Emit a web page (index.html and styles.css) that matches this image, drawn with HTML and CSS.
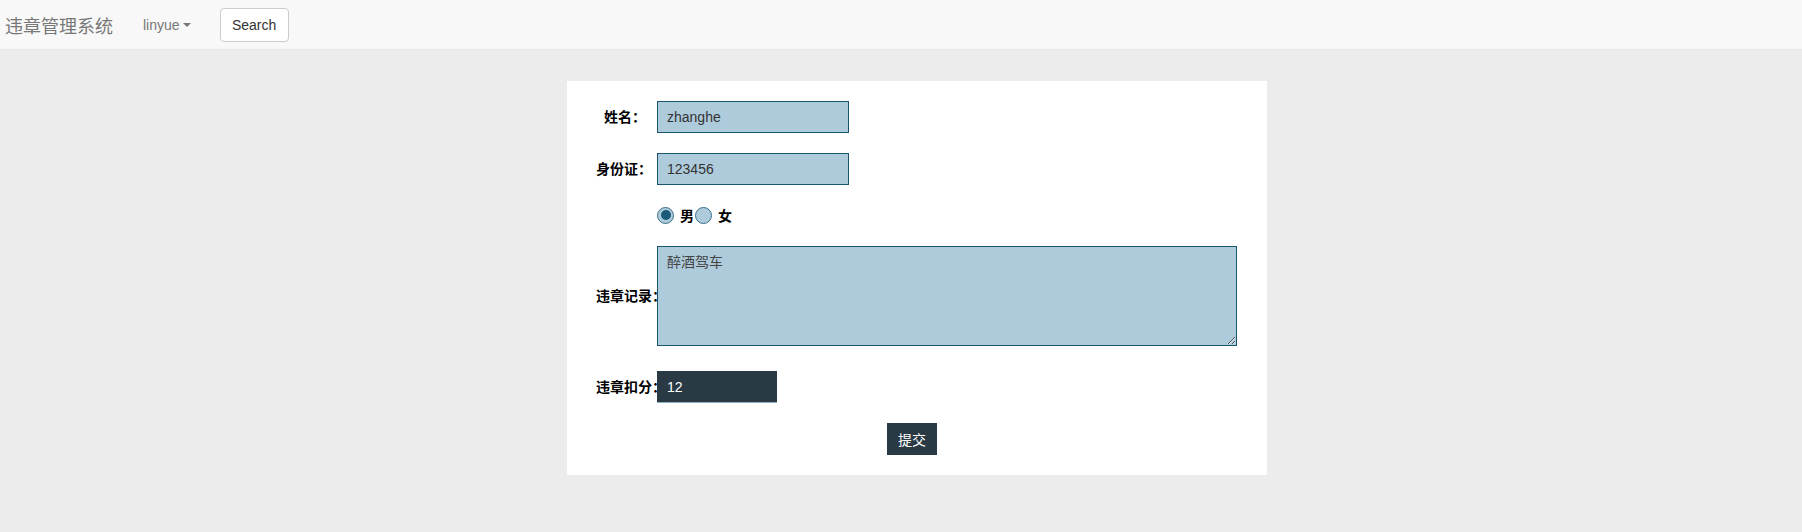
FILE: index.html
```html
<!DOCTYPE html>
<html lang="zh">
<head>
<meta charset="utf-8">
<title>违章管理系统</title>
<link rel="stylesheet" href="styles.css">
</head>
<body>
<nav class="navbar">
  <a class="brand" href="#">违章管理系统</a>
  <a class="user" href="#">linyue<span class="caret"></span></a>
  <button class="search-btn" type="button">Search</button>
</nav>
<main class="wrap">
  <form class="panel">
    <div class="row">
      <label class="lbl">姓名：</label>
      <input class="field" type="text" value="zhanghe">
    </div>
    <div class="row">
      <label class="lbl">身份证：</label>
      <input class="field" type="text" value="123456">
    </div>
    <div class="row radio-row">
      <span class="lbl"></span>
      <input class="radio" type="radio" name="sex" checked><span class="opt">男</span><input class="radio" type="radio" name="sex"><span class="opt">女</span>
    </div>
    <div class="row area-row">
      <label class="lbl">违章记录：</label>
      <textarea class="area">醉酒驾车</textarea>
    </div>
    <div class="row score-row">
      <label class="lbl">违章扣分：</label>
      <input class="score" type="text" value="12">
    </div>
    <div class="actions">
      <button class="submit" type="button">提交</button>
    </div>
  </form>
</main>
</body>
</html>
```
FILE: styles.css
```css
html, body {
  margin: 0;
  padding: 0;
}
body {
  background: #ececec;
  font-family: "Liberation Sans", "Noto Sans CJK SC", sans-serif;
  font-size: 14px;
  color: #333;
}
.navbar {
  height: 49px;
  background: #f8f8f8;
  border-bottom: 1px solid #e7e7e7;
  display: flex;
  align-items: center;
}
.brand {
  margin-left: 5px;
  font-size: 18px;
  color: #777;
  text-decoration: none;
  font-family: "Noto Sans CJK SC", sans-serif;
  line-height: 20px;
}
.user {
  margin-left: 30px;
  color: #777;
  text-decoration: none;
  display: flex;
  align-items: center;
}
.caret {
  display: inline-block;
  width: 0;
  height: 0;
  margin-left: 3px;
  border-top: 4px solid #777;
  border-left: 4px solid transparent;
  border-right: 4px solid transparent;
}
.search-btn {
  margin-left: 29px;
  height: 34px;
  width: 69px;
  background: #fff;
  border: 1px solid #ccc;
  border-radius: 4px;
  font-family: "Liberation Sans", sans-serif;
  font-size: 14px;
  color: #333;
  padding: 0;
}
.wrap {
  padding: 31px 0 0 32px;
}
.panel {
  width: 700px;
  margin: 0 auto;
  background: #fff;
  box-sizing: border-box;
  padding: 20px 30px 20px 20px;
}
.row {
  display: flex;
  align-items: center;
  margin-bottom: 20px;
}
.lbl {
  flex: 0 0 50px;
  width: 50px;
  margin-left: 9px;
  margin-right: 11px;
  text-align: right;
  white-space: nowrap;
  font-weight: bold;
  color: #000;
  font-family: "Noto Sans CJK SC", sans-serif;
  font-size: 14px;
  line-height: 18px;
  padding-bottom: 2px;
}
.field {
  width: 192px;
  height: 32px;
  box-sizing: border-box;
  margin: 0;
  padding: 0 9px;
  background: #aecbdc;
  border: 1px solid #1a5570;
  color: #333;
  font-family: "Liberation Sans", sans-serif;
  font-size: 14px;
  outline: none;
}
.radio-row {
  height: 20px;
  margin-bottom: 21px;
}
.radio {
  -webkit-appearance: none;
  appearance: none;
  width: 17px;
  height: 17px;
  margin: 0 6px 0 0;
  border-radius: 50%;
  background: #aecbdc;
  border: 1px solid #3d6f88;
  box-sizing: border-box;
  position: relative;
}
.radio:checked::after {
  content: "";
  position: absolute;
  left: 2.5px;
  top: 2.5px;
  width: 10px;
  height: 10px;
  border-radius: 50%;
  background: #1b5a78;
}
.opt {
  font-weight: bold;
  color: #000;
  font-family: "Noto Sans CJK SC", sans-serif;
}
.opt + .radio {
  margin-left: 1px;
}
.area-row {
  margin-bottom: 25px;
}
.area {
  width: 580px;
  height: 100px;
  box-sizing: border-box;
  margin: 0;
  padding: 4px 9px;
  background: #aecbdc;
  border: 1px solid #1a5570;
  color: #444;
  font-family: "Noto Sans CJK SC", sans-serif;
  font-size: 14px;
  outline: none;
}
.score {
  width: 120px;
  height: 32px;
  box-sizing: border-box;
  margin: 0;
  padding: 0 10px;
  background: #2a3a44;
  border: none;
  border-bottom: 1px solid #8fb3c6;
  color: #fff;
  font-family: "Liberation Sans", sans-serif;
  font-size: 14px;
  outline: none;
}
.actions {
  display: flex;
  justify-content: center;
}
.submit {
  width: 50px;
  height: 32px;
  padding: 0;
  border: none;
  background: #2a3a44;
  color: #fff;
  font-family: "Noto Sans CJK SC", sans-serif;
  font-size: 14px;
}
```
